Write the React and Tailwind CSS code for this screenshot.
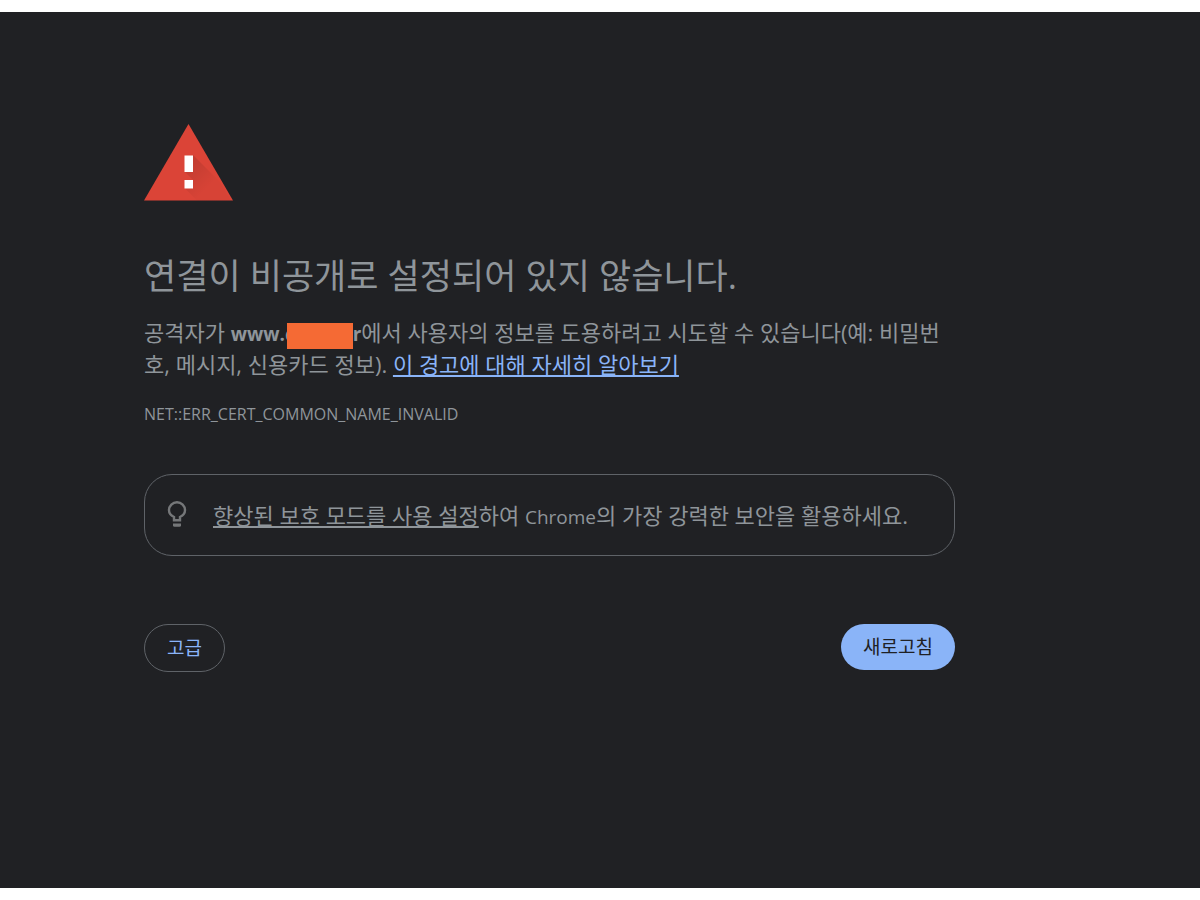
import React from 'react';

const WarningIcon = () => (
  <svg viewBox="0 0 90 78" className="block w-[90px] h-[78px]" aria-hidden="true">
    <defs>
      <linearGradient id="shade" x1="0" y1="0" x2="1" y2="1">
        <stop offset="0" stopColor="#000" stopOpacity="0.14" />
        <stop offset="0.6" stopColor="#000" stopOpacity="0.02" />
      </linearGradient>
    </defs>
    <path d="M44.5 0 89 76.500H0Z" fill="#db4437" />
    <path d="M49 31 76 58 87 76.500H53L40.500 64H49V56L41 48H49Z" fill="url(#shade)" />
    <path d="M40.500 31.500H49V48H40.500ZM40.500 56H49V64.500H40.500Z" fill="#fff" />
  </svg>
);

const BulbIcon = () => (
  <svg viewBox="0 0 20 28" className="block w-5 h-7 shrink-0" aria-hidden="true">
    <path
      d="M7 19.300v-3.300C4 14.500 2 12.400 2 9.300a8 8 0 0 1 16 0c0 3.100-2 5.200-5 6.700v3.300Z"
      fill="none"
      stroke="#757779"
      strokeWidth="2.400"
    />
    <path d="M6 22.400h8v1.800q0 1.500-1.500 1.500h-5q-1.500 0-1.500-1.500Z" fill="#757779" />
  </svg>
);

const App = () => {
  return (
    <div
      lang="ko"
      className="min-h-screen bg-white py-3 font-['Open_Sans','Noto_Sans_CJK_KR',sans-serif] text-[#8f959a]"
    >
      <main className="min-h-[calc(100vh-24px)] bg-[#202124] pt-28 pb-12 pl-[12%] pr-6">
        <div className="max-w-[811px]">
          <WarningIcon />
          <h1 className="mt-12 text-[35px] leading-[52px]">연결이 비공개로 설정되어 있지 않습니다.</h1>
          <p className="mt-[14px] text-[22px] leading-8 break-all">
            공격자가{' '}
            <b className="text-[19px] leading-none">
              www.c
              <span className="inline-block w-[66px] h-[26px] -ml-2 -my-1 relative align-middle bg-[#f56a34]" />r
            </b>
            에서 사용자의 정보를 도용하려고 시도할 수 있습니다(예: 비밀번호, 메시지, 신용카드 정보).{' '}
            <a href="#" className="text-[#8ab4f8] underline">이 경고에 대해 자세히 알아보기</a>
          </p>
          <p className="mt-[22px] text-base leading-6">NET::ERR_CERT_COMMON_NAME_INVALID</p>
          <div className="mt-12 flex min-h-[82px] items-center gap-[26px] rounded-[28px] border border-[#5f6368] px-[22px] py-4">
            <BulbIcon />
            <p className="text-[22px] leading-8">
              <a href="#" className="underline">향상된 보호 모드를 사용 설정</a>
              하여 <span className="text-[19px] leading-none">Chrome</span>의 가장 강력한 보안을 활용하세요.
            </p>
          </div>
          <div className="mt-[68px] flex items-start justify-between">
            <button type="button" className="h-12 rounded-full border border-[#5f6368] px-[22px] text-[19px] text-[#8ab4f8]">
              고급
            </button>
            <button type="button" className="h-[46px] rounded-full bg-[#8ab4f8] px-[22px] text-[19px] text-[#202124]">
              새로고침
            </button>
          </div>
        </div>
      </main>
    </div>
  );
};

export default App;
